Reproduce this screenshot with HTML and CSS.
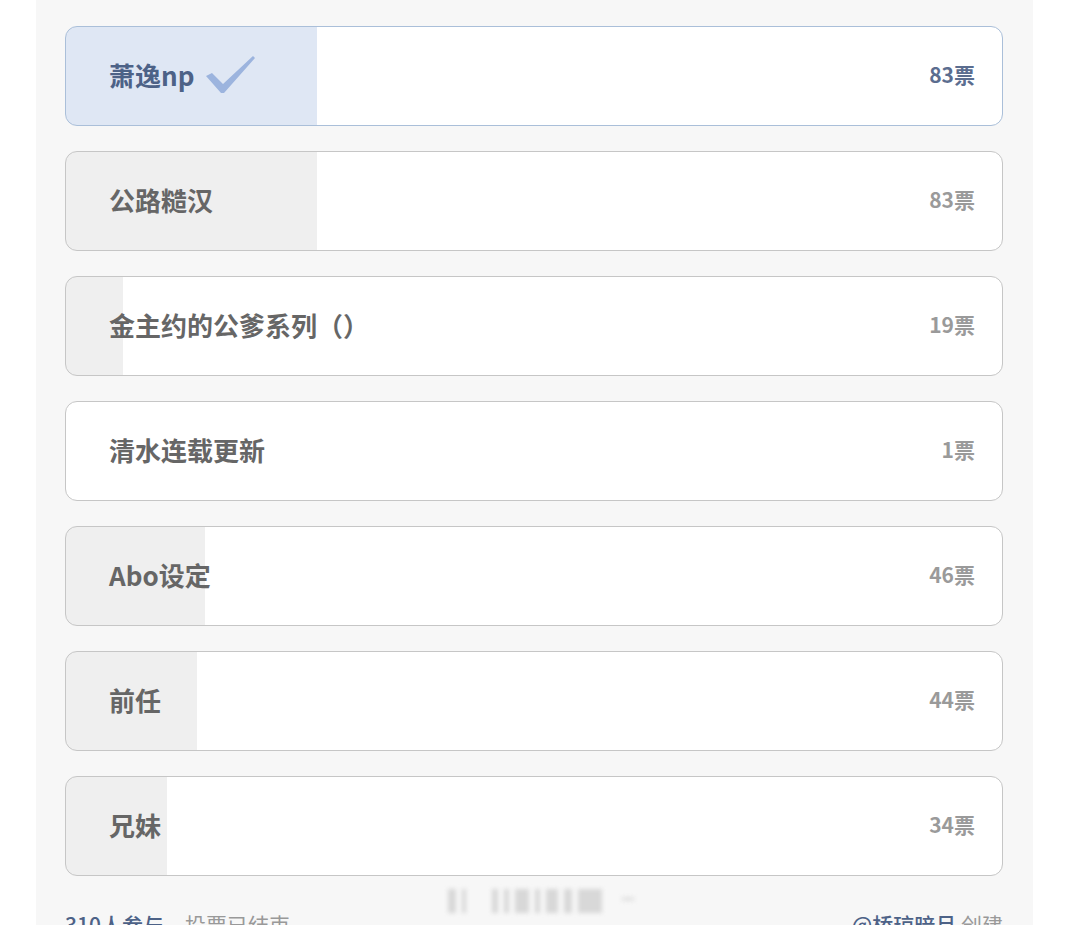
FILE: index.html
```html
<!DOCTYPE html>
<html lang="zh-CN">
<head>
	<meta charset="UTF-8"/>
	<meta name="viewport" content="width=device-width, initial-scale=1.0">
	<title>投票结果</title>
	<link rel="stylesheet" href="styles.css">
</head>
<body>
	<!-- Poll results panel -->
	<div class="panel">
		<div class="options">
			<div class="option voted" style="--p: 26.8%;">
				<span class="label">萧逸np
					<svg class="check" width="50" height="38" viewBox="0 0 50 38">
						<path d="M0 20 L6 17 L17 28 L47 0 L49 2 L18 37 L15 37 Z" fill="#9cb4de"/>
					</svg>
				</span>
				<span class="votes">83票</span>
			</div>
			<div class="option" style="--p: 26.8%;">
				<span class="label">公路糙汉</span>
				<span class="votes">83票</span>
			</div>
			<div class="option" style="--p: 6.1%;">
				<span class="label">金主约的公爹系列（）</span>
				<span class="votes">19票</span>
			</div>
			<div class="option" style="--p: 0%;">
				<span class="label">清水连载更新</span>
				<span class="votes">1票</span>
			</div>
			<div class="option" style="--p: 14.8%;">
				<span class="label">Abo设定</span>
				<span class="votes">46票</span>
			</div>
			<div class="option" style="--p: 14.0%;">
				<span class="label">前任</span>
				<span class="votes">44票</span>
			</div>
			<div class="option" style="--p: 10.8%;">
				<span class="label">兄妹</span>
				<span class="votes">34票</span>
			</div>
		</div>
		<!-- Footer line -->
		<div class="footer">
			<span><span class="blue">310人参与</span>，投票已结束</span>
			<span><span class="blue">@桥琼暗月</span> 创建</span>
		</div>
		<!-- blurred watermark over the footer -->
		<div class="watermark">
			<i style="width: 8px;"></i><i style="width: 4px;"></i><i class="gap" style="width: 6px;"></i><i style="width: 5px;"></i><i style="width: 14px;"></i><i style="width: 5px;"></i><i style="width: 12px;"></i><i style="width: 8px;"></i><i style="width: 24px;"></i><i class="dash"></i>
		</div>
	</div>
</body>
</html>
```

FILE: styles.css
```css
	/* Page */
	body {
		margin: 0;
		background-color: #fff;
		font-family: "Noto Sans CJK SC", "Noto Sans", sans-serif;
	}
	/* Grey panel holding the poll */
	.panel {
		position: relative;
		width: 997px;
		margin-left: 36px;
		box-sizing: border-box;
		padding: 26px 30px 0 29px;
		background-color: #f7f7f7;
		height: 925px;
		overflow: hidden;
	}
	.options {
		display: flex;
		flex-direction: column;
		gap: 25px;
	}
	/* One option row, the fill is a gradient sized by --p */
	.option {
		display: flex;
		align-items: center;
		justify-content: space-between;
		height: 100px;
		box-sizing: border-box;
		padding: 0 27px 4px 43px;
		border: 1.5px solid #c6c6c6;
		border-radius: 12px;
		background: linear-gradient(to right, #efefef var(--p), #fff var(--p));
	}
	.option.voted {
		border-color: #aabfd9;
		background: linear-gradient(to right, #dfe7f4 var(--p), #fff var(--p));
	}
	.label {
		display: flex;
		align-items: center;
		font-size: 26px;
		font-weight: 700;
		color: #666;
	}
	.voted .label {
		color: #4d6287;
	}
	.check {
		margin-left: 12px;
		margin-top: 2px;
	}
	.votes {
		font-size: 21px;
		font-weight: 700;
		color: #9a9a9a;
	}
	.voted .votes {
		color: #5b6d8f;
	}
	/* Footer text */
	.footer {
		display: flex;
		justify-content: space-between;
		margin-top: 34px;
		font-size: 21px;
		line-height: 28px;
		color: #999;
	}
	.footer .blue {
		color: #4d6287;
		font-weight: 500;
	}
	.watermark {
		position: absolute;
		left: 412px;
		top: 889px;
		display: flex;
		align-items: flex-start;
		gap: 6px;
		filter: blur(2px);
	}
	.watermark i {
		display: block;
		height: 24px;
		background-color: #d8d8d8;
	}
	.watermark i.gap {
		margin-left: 20px;
	}
	.watermark i.dash {
		width: 12px;
		height: 4px;
		margin-top: 8px;
		margin-left: 14px;
		background-color: #e2e2e2;
	}
```
